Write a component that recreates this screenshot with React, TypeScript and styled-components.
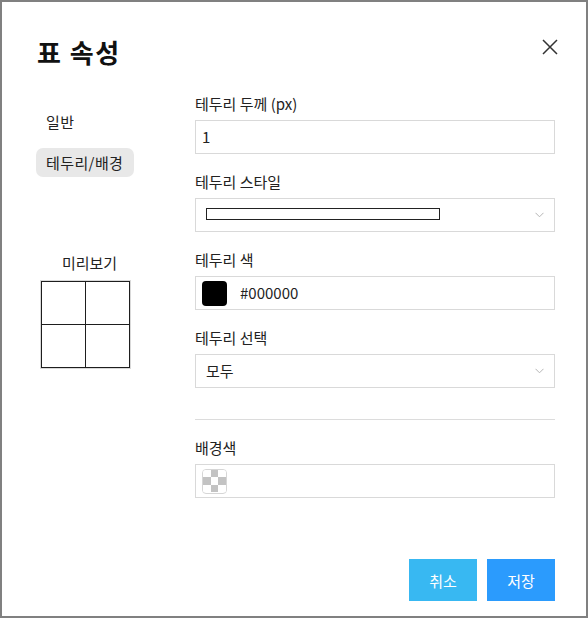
import React from "react";
import styled, { createGlobalStyle } from "styled-components";

const Global = createGlobalStyle`
  html, body { margin: 0; padding: 0; background: #fff; }
  body { font-family: "Noto Sans CJK KR", "Noto Sans", sans-serif; color: #222; }
  * { box-sizing: border-box; }
`;

const Dialog = styled.div`
  width: 588px;
  height: 618px;
  border: 2px solid #808080;
  background: #fff;
  display: flex;
  flex-direction: column;
  padding: 33px 31px 15px 34px;
`;

const Header = styled.div`
  display: flex;
  justify-content: space-between;
  align-items: flex-start;
`;

const Title = styled.h1`
  margin: 0 0 0 1px;
  font-size: 26px;
  line-height: 34px;
  letter-spacing: 1.5px;
  font-weight: 700;
  color: #111;
`;

const CloseButton = styled.button`
  border: none;
  background: none;
  padding: 0;
  margin: 4px -3px 0 0;
  width: 16px;
  height: 16px;
  display: flex;
  cursor: pointer;
`;

const Body = styled.div`
  display: flex;
  margin-top: 25px;
`;

const Side = styled.div`
  width: 159px;
  flex: none;
  display: flex;
  flex-direction: column;
  padding-top: 13px;
`;

const Nav = styled.div`
  display: flex;
  flex-direction: column;
  align-items: flex-start;
  gap: 12px;
`;

const NavItem = styled.div<{ $active?: boolean }>`
  height: 29px;
  padding: 0 11px 0 10px;
  border-radius: 7px;
  font-size: 15px;
  line-height: 29px;
  letter-spacing: 0.4px;
  color: #222;
  background: ${(p) => (p.$active ? "#e8e8e8" : "transparent")};
`;

const Preview = styled.div`
  margin: 76px 0 0 5px;
  display: flex;
  flex-direction: column;
  align-items: flex-start;
`;

const PreviewLabel = styled.div`
  width: 97px;
  text-align: center;
  font-size: 15px;
  line-height: 20px;
  color: #222;
  margin-bottom: 8px;
`;

const PreviewGrid = styled.div`
  width: 89px;
  height: 87px;
  display: grid;
  grid-template-columns: 1fr 1fr;
  grid-template-rows: 1fr 1fr;
  border: 1px solid #1e1e1e;
  box-shadow: 0 0 0 1px rgba(0, 0, 0, 0.15);
`;

const PreviewCell = styled.div<{ $right?: boolean; $bottom?: boolean }>`
  border-right: ${(p) => (p.$right ? "1px solid #1e1e1e" : "none")};
  border-bottom: ${(p) => (p.$bottom ? "1px solid #1e1e1e" : "none")};
`;

const Main = styled.div`
  flex: 1;
  display: flex;
  flex-direction: column;
  gap: 18px;
`;

const Field = styled.div`
  display: flex;
  flex-direction: column;
`;

const Label = styled.div`
  font-size: 15px;
  line-height: 20px;
  color: #222;
  margin-bottom: 6px;
`;

const Box = styled.div<{ $pad?: number }>`
  height: 34px;
  border: 1px solid #d9d9d9;
  background: #fff;
  display: flex;
  align-items: center;
  padding: 0 10px 0 ${(p) => p.$pad ?? 10}px;
  font-size: 15px;
  color: #222;
`;

const Value = styled.span`
  flex: 1;
  font-size: 15px;
  line-height: 20px;
  color: #222;
`;

const LineSample = styled.div`
  width: 234px;
  height: 12px;
  border: 1px solid #222;
  margin-top: -2px;
`;

const Spacer = styled.div`
  flex: 1;
`;

const Chevron = styled.svg`
  width: 9px;
  height: 6px;
  flex: none;
`;

const Swatch = styled.div<{ $color: string }>`
  width: 25px;
  height: 25px;
  border-radius: 4px;
  background: ${(p) => p.$color};
  margin-right: 13px;
  flex: none;
`;

const CheckSwatch = styled.div`
  width: 25px;
  height: 25px;
  border-radius: 4px;
  border: 1px solid #d6d6d6;
  overflow: hidden;
  display: grid;
  grid-template-columns: repeat(3, 1fr);
  grid-template-rows: repeat(3, 1fr);
  flex: none;
`;

const CheckCell = styled.div<{ $dark?: boolean }>`
  background: ${(p) => (p.$dark ? "#c3c3c3" : "#fff")};
`;

const Divider = styled.div`
  height: 1px;
  background: #dcdcdc;
  margin-top: 13px;
`;

const Footer = styled.div`
  margin-top: auto;
  display: flex;
  justify-content: flex-end;
  gap: 10px;
`;

const Button = styled.button<{ $primary?: boolean }>`
  height: 42px;
  padding: 0 19px;
  min-width: 68px;
  border: none;
  border-radius: 0;
  background: ${(p) => (p.$primary ? "#2b9bfd" : "#38b8f2")};
  color: #fff;
  font-family: "Noto Sans CJK KR", "Noto Sans", sans-serif;
  font-size: 15px;
  cursor: pointer;
`;

const ChevronDown = () => (
  <Chevron viewBox="0 0 9 6">
    <path d="M0.5 0.8 L4.5 4.8 L8.5 0.8" fill="none" stroke="#b5b5b5" strokeWidth="1" />
  </Chevron>
);

const checker = [false, true, false, true, false, true, false, true, false];

export default function App() {
  return (
    <>
      <Global />
      <Dialog>
        <Header>
          <Title>표 속성</Title>
          <CloseButton aria-label="닫기">
            <svg width="16" height="16" viewBox="0 0 16 16">
              <path d="M1 1 L15 15 M15 1 L1 15" stroke="#333" strokeWidth="1.5" fill="none" />
            </svg>
          </CloseButton>
        </Header>
        <Body>
          <Side>
            <Nav>
              <NavItem>일반</NavItem>
              <NavItem $active>테두리/배경</NavItem>
            </Nav>
            <Preview>
              <PreviewLabel>미리보기</PreviewLabel>
              <PreviewGrid>
                <PreviewCell $right $bottom />
                <PreviewCell $bottom />
                <PreviewCell $right />
                <PreviewCell />
              </PreviewGrid>
            </Preview>
          </Side>
          <Main>
            <Field>
              <Label>테두리 두께 (px)</Label>
              <Box $pad={6}>
                <Value>1</Value>
              </Box>
            </Field>
            <Field>
              <Label>테두리 스타일</Label>
              <Box>
                <LineSample />
                <Spacer />
                <ChevronDown />
              </Box>
            </Field>
            <Field>
              <Label>테두리 색</Label>
              <Box $pad={6}>
                <Swatch $color="#000" />
                <Value>#000000</Value>
              </Box>
            </Field>
            <Field>
              <Label>테두리 선택</Label>
              <Box>
                <Value>모두</Value>
                <ChevronDown />
              </Box>
            </Field>
            <Divider />
            <Field>
              <Label>배경색</Label>
              <Box $pad={6}>
                <CheckSwatch>
                  {checker.map((d, i) => (
                    <CheckCell key={i} $dark={d} />
                  ))}
                </CheckSwatch>
              </Box>
            </Field>
          </Main>
        </Body>
        <Footer>
          <Button>취소</Button>
          <Button $primary>저장</Button>
        </Footer>
      </Dialog>
    </>
  );
}
